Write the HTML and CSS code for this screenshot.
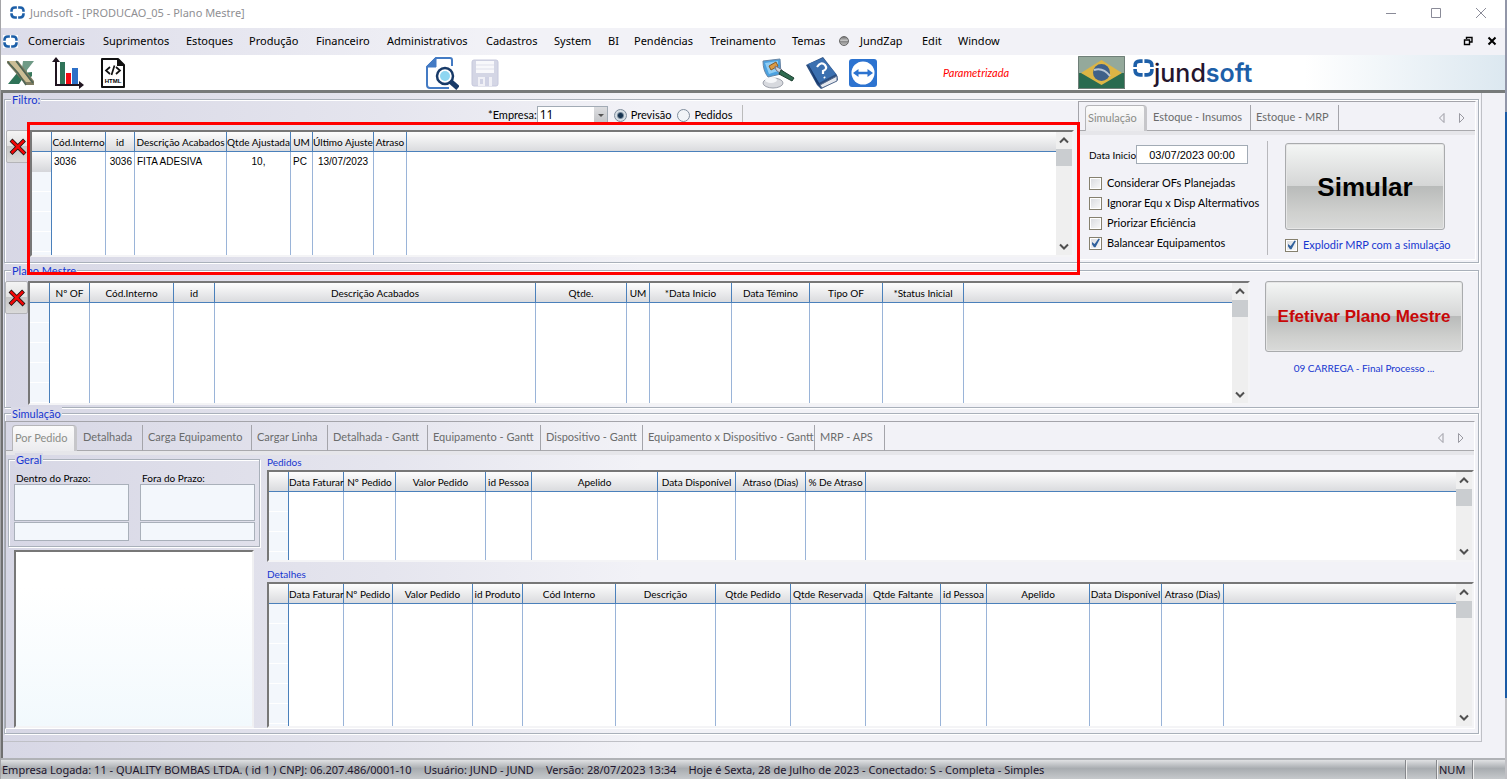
FILE: index.html
```html
<!DOCTYPE html>
<html lang="pt-BR">
<head>
<meta charset="utf-8">
<title>Jundsoft - [PRODUCAO_05 - Plano Mestre]</title>
<link rel="stylesheet" href="styles.css">
</head>
<body>
<svg class="defs" aria-hidden="true">
  <symbol id="ring" viewBox="0 0 14 12">
    <g fill="none" stroke="#1d5fa8" stroke-width="2.4">
      <path d="M6.4 1.4H4.6Q1.4 1.4 1.4 4.6V5.4M1.4 6.6V7.4Q1.4 10.6 4.6 10.6H6.4M7.6 10.6H9.4Q12.6 10.6 12.6 7.4V6.6M12.6 5.4V4.6Q12.6 1.4 9.4 1.4H7.6"/>
    </g>
  </symbol>
  <symbol id="cross" viewBox="0 0 18 18">
    <path d="M2 2L16 16M15.500 2L2 15.500" stroke="#111" stroke-width="4" fill="none"/>
    <path d="M2.500 2.500L15.500 15.500M15 2.500L2.500 15" stroke="#f00808" stroke-width="2.500" fill="none"/>
  </symbol>
  <symbol id="up" viewBox="0 0 16 17"><path d="M4 10.500L8 6.500L12 10.500" fill="none" stroke="#505050" stroke-width="2"/></symbol>
  <symbol id="down" viewBox="0 0 16 17"><path d="M4 6.500L8 10.500L12 6.500" fill="none" stroke="#505050" stroke-width="2"/></symbol>
  <symbol id="prev" viewBox="0 0 8 10"><path d="M6 .5V9.500L1.500 5Z" fill="none" stroke="#9a9aa2"/></symbol>
  <symbol id="next" viewBox="0 0 8 10"><path d="M1.500 .5V9.500L6 5Z" fill="none" stroke="#9a9aa2"/></symbol>
</svg>
<div class="desktop">
<div class="window">
  <header class="titlebar">
    <svg class="ring"><use href="#ring"/></svg>
    <h1>Jundsoft - [PRODUCAO_05 - Plano Mestre]</h1>
    <div class="winbuttons">
      <button aria-label="Minimizar"><svg viewBox="0 0 12 12"><path d="M1 6.500H11"/></svg></button>
      <button aria-label="Maximizar"><svg viewBox="0 0 12 12"><path d="M1.500 1.500H10.500V10.500H1.500Z"/></svg></button>
      <button aria-label="Fechar"><svg viewBox="0 0 12 12"><path d="M1 1L11 11M11 1L1 11"/></svg></button>
    </div>
  </header>
  <nav class="menubar">
    <svg class="ring"><use href="#ring"/></svg>
    <div class="menus">
      <button>Comerciais</button><button>Suprimentos</button><button>Estoques</button><button>Produção</button><button>Financeiro</button><button>Administrativos</button><button>Cadastros</button><button>System</button><button>BI</button><button>Pendências</button><button>Treinamento</button><button>Temas</button><span class="dot"></span><button>JundZap</button><button>Edit</button><button>Window</button>
    </div>
    <div class="mdibuttons">
      <button aria-label="Restaurar"><svg viewBox="0 0 10 10"><path d="M3.500 3V1.500H9V6H7M3 1.500H9" /><path d="M1.500 4H6.500V8.500H1.500Z"/></svg></button>
      <button aria-label="Fechar janela"><svg viewBox="0 0 10 10"><path d="M1.500 1.500L8.500 8.500M8.500 1.500L1.500 8.500" stroke-width="2"/></svg></button>
    </div>
  </nav>
  <div class="toolbar">
    <div class="tools tools-export">
      <button aria-label="Excel"><svg width="30" height="30" viewBox="0 0 30 30"><path d="M17 3H28L21 12V14L15 17Z" fill="#6f9a86"/><path d="M2 26H13L17 20L11 15Z" fill="#2f7358"/><path d="M17 15L26 14V18L24 20L19 18Z" fill="#39785c"/><path d="M1 3H12L28 23V27H20L1 5Z" fill="#807d62"/><path d="M3 3H10L25 24H20L4 6Z" fill="#cbbd95"/><path d="M10 3L27 25M2 4L12 15L20 27" stroke="#4e6555" stroke-width="1.500" fill="none"/></svg></button>
      <button aria-label="Gráfico"><svg width="32" height="32" viewBox="0 0 32 32"><path d="M8 5H13V27H8Z" fill="#2f7358"/><path d="M14 16H19V27H14Z" fill="#f40a12"/><path d="M20 11H26V27H20Z" fill="#2d70c8"/><path d="M4 2V29M3 28H29" stroke="#201520" stroke-width="2" fill="none"/><path d="M4 0L8 5H0ZM32 28L27 24V32Z" fill="#201520"/></svg></button>
      <button aria-label="HTML"><svg width="26" height="32" viewBox="0 0 26 32"><path d="M2 2H18L24 8V30H2Z" fill="#fff" stroke="#111" stroke-width="2" stroke-linejoin="round"/><path d="M17 1L25 9H17Z" fill="#111"/><path d="M10 10L6 13.500L10 17M16 10L20 13.500L16 17M14.500 8.500L11.500 18" stroke="#111" stroke-width="1.700" fill="none"/><text x="13" y="26" text-anchor="middle" class="htmltag">HTML</text></svg></button>
    </div>
    <div class="tools tools-file">
      <button aria-label="Pesquisar"><svg width="34" height="34" viewBox="0 0 34 34"><path d="M27 10V4Q27 2 25 2H11L2 11V29Q2 32 5 32H24" fill="none" stroke="#447bc4" stroke-width="2"/><path d="M11 2V11H2L2 10L10 2Z" fill="#447bc4" stroke="#447bc4"/><path d="M25 25L33 32" stroke="#183a68" stroke-width="5"/><circle cx="20" cy="20" r="8" fill="#fff" stroke="#183a68" stroke-width="2.500"/><circle cx="20" cy="20" r="5" fill="#8ed6f1"/></svg></button>
      <button aria-label="Salvar" disabled><svg width="28" height="28" viewBox="0 0 28 28"><rect x="1" y="1" width="26" height="26" rx="2" fill="#d4d6e5" stroke="#c6c8dc"/><path d="M5 2H23V14H5Z" fill="#f8f8fb"/><path d="M5 6H23M5 10H23" stroke="#dfe0eb"/><path d="M7 18H21V27H7Z" fill="#f0f0f6"/><path d="M9 20H12V25H9ZM14 18H18V27H14Z" fill="#d0d2e4"/></svg></button>
    </div>
    <div class="tools tools-help">
      <button aria-label="Temas"><svg width="34" height="32" viewBox="0 0 34 32"><ellipse cx="12" cy="26" rx="10" ry="5" fill="#d7d9de" stroke="#9da1ab"/><ellipse cx="10" cy="23" rx="6" ry="3" fill="#f6f7f9"/><path d="M2 4L19 2L20 17L7 20Q2 14 2 4Z" fill="#4ca2e0" stroke="#6a86a5"/><path d="M4 6L17 4V14L8 17Z" fill="#91cdf4"/><path d="M8 9L15 5L17 9L10 13Z" fill="#db9a43" stroke="#8a5b22"/><path d="M14 9L20 12L24 17L20 17L15 13Z" fill="#cfd5dc" stroke="#778"/><path d="M20 13L33 21L31 24L18 17Z" fill="#2f6b50" stroke="#1c4030"/></svg></button>
      <button aria-label="Ajuda"><svg width="34" height="34" viewBox="0 0 34 34"><path d="M1 9L18 1L32 19L33 24L16 33L12 29Z" fill="#2c4f82"/><path d="M15 29L32 20V25L17 32Z" fill="#e5e8ee" stroke="#53698c"/><path d="M3 8L18 2L31 18L14 27Z" fill="#3b70b0"/><path d="M3 8L14 27L15 30L11 26Z" fill="#173b70"/><path d="M12 11Q16 5 20 9Q23 13 18 15L18 18M19 21L20 22" fill="none" stroke="#fff" stroke-width="2.200"/></svg></button>
      <button aria-label="Acesso remoto"><svg width="28" height="28" viewBox="0 0 28 28"><rect width="28" height="28" rx="3" fill="#2c73d0"/><circle cx="14" cy="14" r="11.500" fill="#fff"/><path d="M4 14L9.500 10V12.800H18.500V10L24 14L18.500 18V15.200H9.500V18Z" fill="#2c73d0"/></svg></button>
    </div>
    <p class="mode">Parametrizada</p>
    <div class="brand">
      <svg width="47" height="33" viewBox="0 0 47 33"><path d="M0 0H47V17H0Z" fill="#94a99b"/><path d="M0 17H47V33H0Z" fill="#2a6b50"/><path d="M3 17L23.500 4L44 17L23.500 29Z" fill="#dcb545"/><circle cx="23.500" cy="16.500" r="8.500" fill="#3f6089"/><path d="M16 14Q25 11 32 20" fill="none" stroke="#b9c6d6" stroke-width="2"/><path d="M.5.5H46.500V32.500H.5Z" fill="none" stroke="#6f7f78"/></svg>
      <svg class="brandring"><use href="#ring"/></svg>
      <span class="brandname">jund<b>soft</b></span>
    </div>
  </div>

  <main class="workspace">
  <div class="canvas">
    <section class="group filter">
      <h2 class="legend">Filtro:</h2>
      <div class="filter-left">
        <div class="filter-row">
          <label for="empresa">*Empresa:</label>
          <span class="combo"><select id="empresa"><option>11</option></select><i></i></span>
          <label class="opt"><input type="radio" name="tipo" checked>Previsão</label>
          <label class="opt"><input type="radio" name="tipo">Pedidos</label>
        </div>
        <div class="grid-row">
          <button class="del" aria-label="Excluir filtro"><svg width="18" height="18"><use href="#cross"/></svg></button>
          <div class="grid marked">
            <div class="sheet"><table class="t-filter">
              <colgroup><col><col><col><col><col><col><col><col><col></colgroup>
              <thead><tr><th></th><th>Cód.Interno</th><th>id</th><th>Descrição Acabados</th><th>Qtde Ajustada</th><th>UM</th><th>Último Ajuste</th><th>Atraso</th><th></th></tr></thead>
              <tbody><tr class="row"><td></td><td>3036</td><td class="num">3036</td><td>FITA ADESIVA</td><td class="mid">10,</td><td>PC</td><td class="mid">13/07/2023</td><td></td><td></td></tr>
              <tr><td></td><td></td><td></td><td></td><td></td><td></td><td></td><td></td><td></td></tr></tbody>
            </table></div>
            <div class="scroll"><svg><use href="#up"/></svg><i></i><svg><use href="#down"/></svg></div>
          </div>
        </div>
      </div>
      <div class="side">
        <div class="tabs" role="tablist">
          <button class="tab on" role="tab">Simulação</button><button class="tab" role="tab">Estoque - Insumos</button><button class="tab" role="tab">Estoque - MRP</button>
          <span class="arrows"><svg><use href="#prev"/></svg><svg><use href="#next"/></svg></span>
        </div>
        <div class="side-body">
          <div class="options">
            <div class="date"><label for="inicio">Data Inicio:</label><input id="inicio" type="text" value="03/07/2023 00:00"></div>
            <label class="check"><input type="checkbox">Considerar OFs Planejadas</label>
            <label class="check"><input type="checkbox">Ignorar Equ x Disp Altermativos</label>
            <label class="check"><input type="checkbox">Priorizar Eficiência</label>
            <label class="check"><input type="checkbox" checked>Balancear Equipamentos</label>
          </div>
          <div class="simulate">
            <button class="big simular">Simular</button>
            <label class="check blue"><input type="checkbox" checked>Explodir MRP com a simulação</label>
          </div>
        </div>
      </div>
    </section>

    <section class="group master">
      <h2 class="legend">Plano Mestre</h2>
      <button class="del" aria-label="Excluir plano"><svg width="18" height="18"><use href="#cross"/></svg></button>
      <div class="grid">
        <div class="sheet"><table class="t-master">
          <colgroup><col><col><col><col><col><col><col><col><col><col><col><col></colgroup>
          <thead><tr><th></th><th>Nº OF</th><th>Cód.Interno</th><th>id</th><th>Descrição Acabados</th><th>Qtde.</th><th>UM</th><th>*Data Inicio</th><th>Data Témino</th><th>Tipo OF</th><th>*Status Inicial</th><th></th></tr></thead>
          <tbody><tr><td></td><td></td><td></td><td></td><td></td><td></td><td></td><td></td><td></td><td></td><td></td><td></td></tr></tbody>
        </table></div>
        <div class="scroll"><svg><use href="#up"/></svg><i></i><svg><use href="#down"/></svg></div>
      </div>
      <div class="commit">
        <button class="big efetivar">Efetivar Plano Mestre</button>
        <p>09 CARREGA - Final Processo ...</p>
      </div>
    </section>

    <section class="group simulation">
      <h2 class="legend">Simulação</h2>
      <div class="book">
        <div class="tabs" role="tablist">
          <button class="tab on" role="tab">Por Pedido</button><button class="tab" role="tab">Detalhada</button><button class="tab" role="tab">Carga Equipamento</button><button class="tab" role="tab">Cargar Linha</button><button class="tab" role="tab">Detalhada - Gantt</button><button class="tab" role="tab">Equipamento - Gantt</button><button class="tab" role="tab">Dispositivo - Gantt</button><button class="tab" role="tab">Equipamento x Dispositivo - Gantt</button><button class="tab" role="tab">MRP - APS</button>
          <span class="arrows"><svg><use href="#prev"/></svg><svg><use href="#next"/></svg></span>
        </div>
        <div class="page">
          <div class="summary">
            <fieldset class="group geral">
              <legend class="legend">Geral</legend>
              <div><label for="dentro">Dentro do Prazo:</label><input id="dentro" class="tall" type="text"><input type="text" aria-label="Dentro do prazo, percentual"></div>
              <div><label for="fora">Fora do Prazo:</label><input id="fora" class="tall" type="text"><input type="text" aria-label="Fora do prazo, percentual"></div>
            </fieldset>
            <div class="chart"></div>
          </div>
          <div class="lists">
            <h3>Pedidos</h3>
            <div class="grid orders">
              <div class="sheet"><table class="t-orders">
                <colgroup><col><col><col><col><col><col><col><col><col><col></colgroup>
                <thead><tr><th></th><th>Data Faturar</th><th>Nº Pedido</th><th>Valor Pedido</th><th>id Pessoa</th><th>Apelido</th><th>Data Disponível</th><th>Atraso (Dias)</th><th>% De Atraso</th><th></th></tr></thead>
                <tbody><tr><td></td><td></td><td></td><td></td><td></td><td></td><td></td><td></td><td></td><td></td></tr></tbody>
              </table></div>
              <div class="scroll"><svg><use href="#up"/></svg><i></i><svg><use href="#down"/></svg></div>
            </div>
            <h3>Detalhes</h3>
            <div class="grid details">
              <div class="sheet"><table class="t-details">
                <colgroup><col><col><col><col><col><col><col><col><col><col><col><col><col><col><col></colgroup>
                <thead><tr><th></th><th>Data Faturar</th><th>Nº Pedido</th><th>Valor Pedido</th><th>id Produto</th><th>Cód Interno</th><th>Descrição</th><th>Qtde Pedido</th><th>Qtde Reservada</th><th>Qtde Faltante</th><th>id Pessoa</th><th>Apelido</th><th>Data Disponível</th><th>Atraso (Dias)</th><th></th></tr></thead>
                <tbody><tr><td></td><td></td><td></td><td></td><td></td><td></td><td></td><td></td><td></td><td></td><td></td><td></td><td></td><td></td><td></td></tr></tbody>
              </table></div>
              <div class="scroll"><svg><use href="#up"/></svg><i></i><svg><use href="#down"/></svg></div>
            </div>
          </div>
        </div>
      </div>
    </section>
  </div>
  </main>

  <footer class="status">
    <span>Empresa Logada: 11 - QUALITY BOMBAS LTDA. ( id 1 ) CNPJ: 06.207.486/0001-10</span>
    <span>Usuário: JUND - JUND</span>
    <span>Versão: 28/07/2023 13:34</span>
    <span>Hoje é Sexta, 28 de Julho de 2023 - Conectado: S - Completa - Simples</span>
    <div class="keys"><span></span><span>NUM</span><span></span></div>
  </footer>
</div>
</div>
</body>
</html>
```

FILE: styles.css
```css
* { box-sizing: border-box; margin: 0; padding: 0; }
body { font: 11px/14px Lato, "Liberation Sans", sans-serif; color: #000; }
button, input, select { font: inherit; color: inherit; }
button { border: 0; background: none; }
fieldset { min-width: 0; border: 0; }
.defs { position: absolute; width: 0; height: 0; }

.desktop {
  display: flex; height: 100vh; min-height: 700px; padding: 0 2px 0 1px;
  background: linear-gradient(90deg, #a5a5a8 50%, transparent 50%), linear-gradient(#9296a8 112px, #1a5aa5 112px, #1a5aa5 698px, #c0c0c4 698px);
}
.window { display: flex; flex: 1; min-width: 0; flex-direction: column; background: #fff; }

.titlebar, .menubar, .status, .titlebar h1 { font-family: "Noto Sans", "Open Sans", sans-serif; font-size: 11px; }
.ring { width: 15px; height: 13px; flex: none; }
.titlebar { display: flex; align-items: center; height: 28px; padding: 0 18px 3px 9px; gap: 5px; }
.titlebar h1 { font-weight: 400; color: #8f8f93; flex: 1; }
.winbuttons { display: flex; gap: 33px; }
.winbuttons svg { display: block; width: 12px; height: 12px; fill: none; stroke: #8a8b98; }
.menubar {
  display: flex; align-items: center; height: 27px; padding: 0 8px 1px 2px; gap: 10px;
  background: linear-gradient(90deg, #dcdce9, #f2f2f7 500px);
}
.menubar .ring { background: #fff; }
.menus {
  flex: 1; display: grid; align-items: center; justify-content: start;
  grid-template-columns: 75px 83px 63px 67px 71px 99px 68px 54px 26px 76px 82px 47px 21px 62px 36px 60px;
}
.menus button { text-align: left; white-space: nowrap; }
.dot { width: 10px; height: 10px; border: 1px solid #666; border-radius: 50%; background: linear-gradient(#777, #ccc 50%, #888 52%, #bbb); }
.mdibuttons { display: flex; gap: 14px; }
.mdibuttons svg { display: block; width: 10px; height: 10px; fill: none; stroke: #000; stroke-width: 1.400; }

.toolbar {
  display: flex; align-items: center; height: 38px; border-bottom: 3px solid #777a7a;
  background: linear-gradient(90deg, transparent, #dce8f0) right / 200px 100% no-repeat #fff;
}
.tools { display: flex; align-items: center; }
.tools button, .tools svg { display: block; }
.tools-export { width: 424px; padding-left: 5px; gap: 16px; }
.tools-file { width: 336px; gap: 12px; }
.tools-help { width: 182px; gap: 10px; }
.htmltag { font: bold 6px "Liberation Sans", sans-serif; }
.mode { width: 135px; color: #f00; font-style: italic; font-size: 11px; }
.brand { display: flex; align-items: center; }
.brandring { width: 21px; height: 20px; margin: 0 0 10px 8px; }
.brandname { font: 500 25px/32px Inter, sans-serif; color: #25152d; }
.brandname b { font-weight: 600; color: #1d5fa8; }

.workspace {
  display: flex; flex: 1; min-height: 0; padding: 0 23px 16px 0; border: solid #707070; border-width: 0 0 0 2px;
  background: linear-gradient(90deg, #d7d7e5, #e5e5ee 380px, #f2f2f7 640px);
}
.canvas { display: flex; flex: 1; min-width: 0; flex-direction: column; padding: 6px 2px 7px 1px; border: solid #bfc0c6; border-width: 0 1px 1px 0; }
.group { position: relative; border: 1px solid #a9b0ba; box-shadow: 1px 1px 0 #fff, inset 1px 1px 0 #fff; }
.legend { position: absolute; top: -7px; left: 6px; padding: 0 1px; font-size: 11px; font-weight: 400; line-height: 14px; color: #1636d0; background: #dadae7; }

.filter { display: flex; height: 164px; margin-bottom: 7px; padding: 0 2px 2px 1px; gap: 4px; }
.filter-left { display: flex; flex: 1; min-width: 0; flex-direction: column; padding-bottom: 3px; }
.filter-row { display: flex; align-items: center; height: 30px; padding-left: 482px; }
.combo { position: relative; display: block; margin: 0 6px 0 0; }
.combo select { display: block; appearance: none; width: 71px; height: 19px; padding-left: 2px; border: 1px solid #a2abb5; border-radius: 0; background: #fff; font: 12px/16px "Noto Sans", sans-serif; }
.combo i { position: absolute; top: 1px; right: 1px; width: 13px; height: 17px; background: linear-gradient(#dcdde0, #c0c2c5); pointer-events: none; }
.combo i::after { content: ""; position: absolute; top: 7px; left: 4px; border: 3px solid transparent; border-top-color: #555; }
.opt { display: flex; align-items: center; gap: 4px; margin-right: 6px; }
.opt:last-child { padding-right: 9px; border-right: 1px solid #bbb; line-height: 20px; }
.opt input { appearance: none; width: 13px; height: 13px; border: 1px solid #7f8d9c; border-radius: 50%; background: #f1f4f7; }
.opt input:checked { background: radial-gradient(#15324f 2px, #d5dde4 4px); }
.grid-row { display: flex; flex: 1; min-height: 0; gap: 1px; }
.del {
  display: grid; place-items: center; flex: none; width: 23px; height: 33px; border: 1px solid #b4b4b8; border-radius: 2px;
  background: linear-gradient(#f4f4f4, #e2e2e2 49%, #c6c6c6 50%, #dadada);
}

.grid { position: relative; display: flex; flex: 1; min-width: 0; min-height: 0; border: 2px solid; border-color: #777 #f4f4f6 #f4f4f6 #777; background: #fff; }
.marked { z-index: 1; }
.marked::after { content: ""; position: absolute; inset: -10px -8px -20px -5px; border: 3px solid #f00; pointer-events: none; }
.sheet { flex: 1; min-width: 0; }
.grid table { width: 100%; height: 100%; table-layout: fixed; border-collapse: separate; border-spacing: 0; font-size: 10px; line-height: 14px; white-space: nowrap; }
.grid th { height: 20px; border-right: 1px solid #4a80bb; border-bottom: 1px solid #4a80bb; background: linear-gradient(#fdfdfd, #dadbde); font-weight: 400; }
.grid td { border-right: 1px solid #9ab4d8; padding: 0 2px; }
.grid td:first-child { border-right-color: #4a80bb; background: repeating-linear-gradient(#f3f7fc 0 19px, #fff 19px 20px); }
.grid th:last-child, .grid td:last-child { border-right: 0; }
.grid .row td { height: 20px; font-family: "Liberation Sans", Arial, sans-serif; }
.grid .row td:first-child { background: linear-gradient(#fafafa, #d5d6da); }
.grid .num { text-align: right; }
.grid .mid { text-align: center; }
.scroll { display: flex; flex-direction: column; flex: none; width: 16px; background: #efefef; }
.scroll svg { width: 16px; height: 17px; flex: none; }
.scroll svg:last-child { margin-top: auto; }
.scroll i { height: 17px; background: #cacdd0; }

.t-filter col:nth-child(1) { width: 20px; }
.t-filter col:nth-child(2) { width: 54px; }
.t-filter col:nth-child(3) { width: 29px; }
.t-filter col:nth-child(4) { width: 92px; }
.t-filter col:nth-child(5) { width: 64px; }
.t-filter col:nth-child(6) { width: 22px; }
.t-filter col:nth-child(7) { width: 61px; }
.t-filter col:nth-child(8) { width: 33px; }
.t-master col:nth-child(1) { width: 20px; }
.t-master col:nth-child(2) { width: 40px; }
.t-master col:nth-child(3) { width: 84px; }
.t-master col:nth-child(4) { width: 41px; }
.t-master col:nth-child(5) { width: 321px; }
.t-master col:nth-child(6) { width: 91px; }
.t-master col:nth-child(7) { width: 23px; }
.t-master col:nth-child(8) { width: 82px; }
.t-master col:nth-child(9) { width: 78px; }
.t-master col:nth-child(10) { width: 73px; }
.t-master col:nth-child(11) { width: 81px; }
.t-orders col:nth-child(1) { width: 20px; }
.t-orders col:nth-child(2) { width: 55px; }
.t-orders col:nth-child(3) { width: 52px; }
.t-orders col:nth-child(4) { width: 90px; }
.t-orders col:nth-child(5) { width: 46px; }
.t-orders col:nth-child(6) { width: 126px; }
.t-orders col:nth-child(7) { width: 78px; }
.t-orders col:nth-child(8) { width: 70px; }
.t-orders col:nth-child(9) { width: 60px; }
.t-details col:nth-child(1) { width: 20px; }
.t-details col:nth-child(2) { width: 55px; }
.t-details col:nth-child(3) { width: 49px; }
.t-details col:nth-child(4) { width: 80px; }
.t-details col:nth-child(5) { width: 50px; }
.t-details col:nth-child(6) { width: 93px; }
.t-details col:nth-child(7) { width: 100px; }
.t-details col:nth-child(8), .t-details col:nth-child(9), .t-details col:nth-child(10) { width: 75px; }
.t-details col:nth-child(11) { width: 46px; }
.t-details col:nth-child(12) { width: 103px; }
.t-details col:nth-child(13) { width: 72px; }
.t-details col:nth-child(14) { width: 62px; }

.tabs { display: flex; align-items: stretch; height: 33px; padding: 3px 9px 4px 6px; background: linear-gradient(transparent 28px, #a9a9ad 28px, #a9a9ad 29px, #e6e6ea 29px); flex: none; }
.tab { flex: none; width: 103px; padding: 0 0 2px 5px; border-right: 1px solid #a4a4aa; text-align: left; color: #6a6c6c; white-space: nowrap; }
.tab.on { margin-right: 1px; padding-left: 2px; border: 1px solid #b5b5b8; border-bottom: 0; border-right: 3px solid #c6c6ca; border-radius: 4px 4px 0 0; background: linear-gradient(#fbfbfb, #ebebee); color: #8b8d88; }
.arrows { display: flex; align-items: center; gap: 12px; margin-left: auto; }
.arrows svg { width: 8px; height: 10px; }

.side { display: flex; flex-direction: column; flex: none; width: 398px; margin-top: 1px; border: 1px solid #a4a4aa; border-color: #a4a4aa #fff #fff #a4a4aa; }
.side .tab:nth-child(1) { width: 62px; }
.side .tab:nth-child(3) { width: 88px; }
.side-body { display: flex; flex: 1; padding: 6px 0 7px 10px; }
.options { display: flex; flex-direction: column; width: 179px; border-right: 1px solid #b8b8bc; }
.date { display: flex; align-items: center; margin: 4px 0 9px; gap: 2px; }
.date label { width: 45px; font-size: 10px; white-space: nowrap; }
.date input { width: 112px; height: 19px; border: 1px solid #a2abb5; background: #fff; text-align: center; font-family: "Liberation Sans", Arial, sans-serif; }
.check { display: flex; align-items: center; gap: 5px; height: 20px; white-space: nowrap; }
.check input { appearance: none; flex: none; width: 13px; height: 13px; border: 1px solid #85806e; background: linear-gradient(135deg, #d8dade, #fafafa); box-shadow: inset 0 0 0 1px #fff; }
.check input:checked::after { content: ""; display: block; width: 11px; height: 11px; background: #31619c; clip-path: polygon(18% 40%, 42% 58%, 78% 8%, 90% 14%, 50% 88%, 36% 88%, 18% 62%); }
.blue { color: #1636d0; }
.simulate { display: flex; flex-direction: column; padding: 2px 0 0 17px; gap: 5px; }
.big {
  border: 1px solid #a9abad; border-radius: 3px; font-family: "Liberation Sans", Arial, sans-serif; font-weight: 700; box-shadow: inset 0 0 0 1px #e6e6e6;
  background: linear-gradient(#f4f6f5, #d5d6d6 49%, #b9bbba 50%, #cfd0ce 80%, #d9dad9);
}
.simular { width: 160px; height: 87px; font-size: 26px; }

.master { display: flex; height: 138px; margin-bottom: 5px; padding: 10px 15px 2px 0; }
.master .grid { margin: 0 15px 0 0; }
.commit { flex: none; width: 198px; text-align: center; }
.efetivar { width: 100%; height: 71px; margin-bottom: 9px; font-size: 17px; color: #c80808; }
.commit p { color: #1636d0; font-size: 10px; }

.simulation { display: flex; flex: 1; min-height: 0; padding: 7px 3px 4px 0; }
.book { display: flex; flex: 1; min-width: 0; flex-direction: column; border: 1px solid #a4a4aa; border-color: #a4a4aa #fff #fff #a4a4aa; }
.book .tab:nth-child(1) { width: 65px; }
.book .tab:nth-child(2) { width: 65px; }
.book .tab:nth-child(3) { width: 109px; }
.book .tab:nth-child(4) { width: 76px; }
.book .tab:nth-child(5) { width: 100px; }
.book .tab:nth-child(6) { width: 113px; }
.book .tab:nth-child(7) { width: 102px; }
.book .tab:nth-child(8) { width: 172px; }
.book .tab:nth-child(9) { width: 70px; }
.page { display: flex; flex: 1; min-height: 0; padding: 0 0 0 2px; gap: 7px; }
.summary { display: flex; flex: none; width: 252px; flex-direction: column; padding-top: 4px; }
.geral { display: flex; height: 88px; margin-bottom: 3px; padding: 12px 4px 0 5px; gap: 11px; justify-content: space-between; }
.geral > div { flex: 1; min-width: 0; }
.geral label { display: block; height: 12px; padding-left: 2px; font-size: 10px; line-height: 12px; }
.geral input { display: block; width: 100%; height: 19px; border: 1px solid #a9b0ba; background: #f3f7fc; }
.geral .tall { height: 37px; margin-bottom: 1px; }
.chart { flex: 1; margin: 0 6px 0 6px; border: 2px solid; border-color: #777 #f0f0f2 #f4f4f6 #777; background: linear-gradient(#fff 20%, #f2f9fd); }
.lists { display: flex; flex: 1; min-width: 0; flex-direction: column; }
.lists h3 { height: 15px; font-size: 10px; font-weight: 400; line-height: 15px; color: #1636d0; }
.orders { flex: none; height: 92px; margin-bottom: 5px; }

.status { display: flex; align-items: center; height: 21px; flex: none; border-top: 2px solid #b0b2b6; padding-left: 1px; color: #20142c; background: linear-gradient(#e0e1e3, #a8acb0 45%, #c6c9cc); white-space: nowrap; }
.status > span { margin-right: 12px; }
.keys { display: flex; align-self: stretch; align-items: center; margin-left: auto; }
.keys span { width: 31px; height: 100%; border-left: 1px solid #85878b; box-shadow: inset 1px 0 0 #eee; line-height: 19px; }
.keys span:nth-child(2) { width: 36px; padding-left: 2px; }
.keys span:nth-child(3) { width: 33px; }
```
